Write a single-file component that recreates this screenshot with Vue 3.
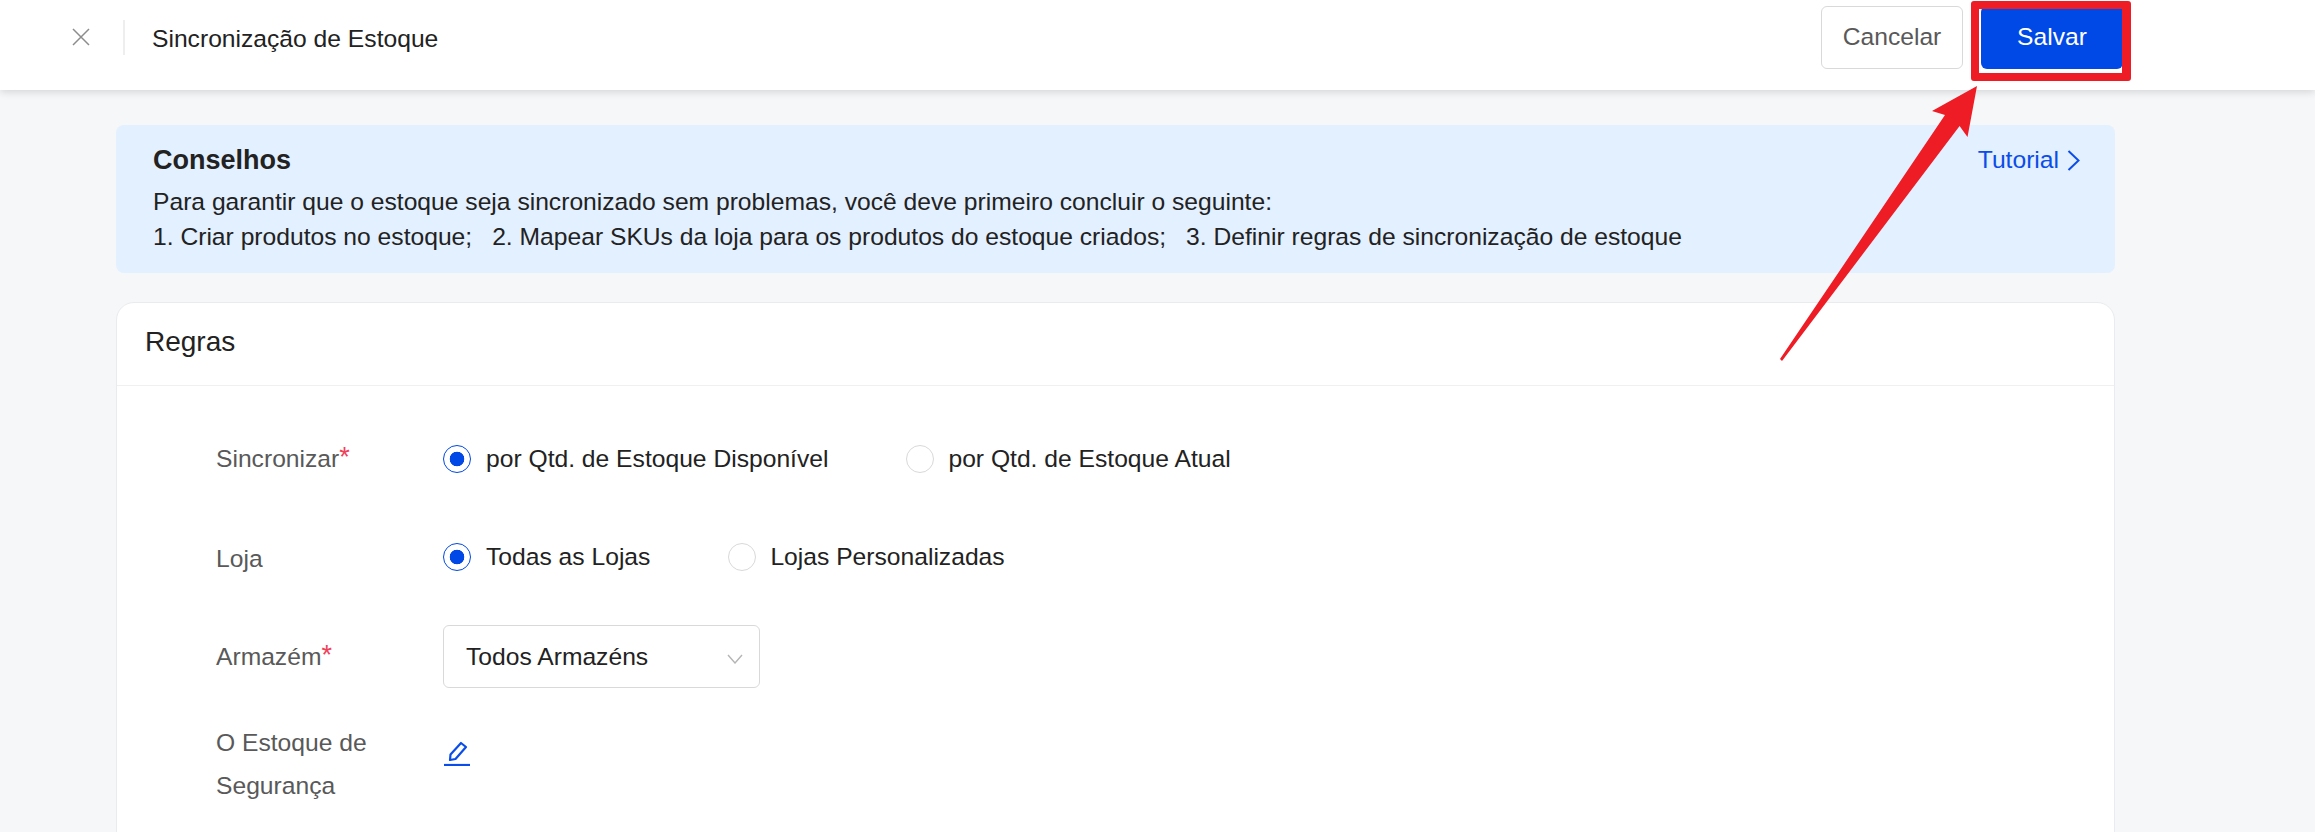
<template>
  <div class="page">
    <header class="topbar">
      <div class="top-left">
        <svg class="close" viewBox="0 0 18 18" fill="none" stroke="#8c8c8c" stroke-width="1.5"><path d="M1 1 L17 17 M17 1 L1 17" /></svg>
        <span class="vline"></span>
        <span class="title">Sincronização de Estoque</span>
      </div>
      <div class="actions">
        <button class="btn cancel">Cancelar</button>
        <button class="btn save">Salvar</button>
      </div>
    </header>
    <main class="content">
      <section class="tips">
        <div class="tips-body">
          <h2>Conselhos</h2>
          <p>Para garantir que o estoque seja sincronizado sem problemas, você deve primeiro concluir o seguinte:</p>
          <p class="steps"><span>1. Criar produtos no estoque;</span><span>2. Mapear SKUs da loja para os produtos do estoque criados;</span><span>3. Definir regras de sincronização de estoque</span></p>
        </div>
        <a class="tutorial">Tutorial
          <svg viewBox="0 0 13 21" width="13" height="21" fill="none" stroke="#0b4de8" stroke-width="2"><path d="M1.5 1 L11.5 10.5 L1.5 20" /></svg>
        </a>
      </section>
      <section class="card">
        <div class="card-head">Regras</div>
        <div class="form">
          <div class="row r1">
            <label>Sincronizar<i>*</i></label>
            <div class="radios">
              <span class="radio on"></span><span class="rtext">por Qtd. de Estoque Disponível</span>
              <span class="radio"></span><span class="rtext">por Qtd. de Estoque Atual</span>
            </div>
          </div>
          <div class="row r2">
            <label>Loja</label>
            <div class="radios">
              <span class="radio on"></span><span class="rtext">Todas as Lojas</span>
              <span class="radio"></span><span class="rtext">Lojas Personalizadas</span>
            </div>
          </div>
          <div class="row r3">
            <label>Armazém<i>*</i></label>
            <div class="select">
              <span>Todos Armazéns</span>
              <svg viewBox="0 0 16 10" width="16" height="10" fill="none" stroke="#b5b5b5" stroke-width="1.4"><path d="M1 1 L8 9 L15 1" /></svg>
            </div>
          </div>
          <div class="row r4">
            <label>O Estoque de Segurança</label>
            <svg class="pencil" viewBox="0 0 26 25" width="26" height="25" fill="none" stroke="#0b4de8" stroke-width="2.2"><path d="M6 19 L6.5 13.5 L17 2 L22 6 L11.5 18 Z" stroke-linejoin="round" /><path d="M0 24 H26" /></svg>
          </div>
        </div>
      </section>
    </main>
    <div class="hl"></div>
    <svg class="arrow" viewBox="0 0 2315 832" width="2315" height="832"><path d="M1977 86 L1932 111 L1945 115 L1780 359 L1782 361 L1959.6 126 L1967.5 137 Z" fill="#ee1c25" /></svg>
  </div>
</template>

<script setup>
</script>

<style>
html, body { margin: 0; padding: 0; overflow: hidden; }
</style>

<style scoped>
.page {
  position: relative;
  width: 2315px;
  height: 832px;
  overflow: hidden;
  background: #f6f7f9;
  font-family: "Liberation Sans", Arial, sans-serif;
  font-size: 24.65px;
  color: #222;
}
.topbar {
  height: 90px;
  box-sizing: border-box;
  background: #fff;
  box-shadow: 0 2px 8px rgba(0,0,0,.14);
  display: flex;
  align-items: flex-start;
  justify-content: space-between;
  padding: 6px 192px 0 72px;
}
.top-left { display: flex; align-items: center; height: 62px; }
.close { width: 18px; height: 18px; margin-right: 33px; }
.vline { width: 2px; height: 35px; background: #eee; margin-right: 27px; }
.title { line-height: 34px; padding-top: 4px; }
.actions { display: flex; gap: 18px; }
.btn {
  width: 142px;
  height: 63px;
  box-sizing: border-box;
  border-radius: 6px;
  font: inherit;
  padding: 0;
  padding-bottom: 2px;
}
.cancel { background: #fff; border: 1px solid #d9d9d9; color: #595959; }
.save { background: #0049e6; border: 0; color: #fff; }
.content { padding: 35px 200px 0 116px; }
.tips {
  height: 148px;
  box-sizing: border-box;
  border-radius: 8px;
  background: #e3f0ff;
  display: flex;
  justify-content: space-between;
  padding: 19px 35px 0 37px;
}
.tips h2 { margin: 0; font-size: 27px; font-weight: 700; line-height: 32px; color: #222; }
.tips p { margin: 0; line-height: 35px; color: #222; }
.tips h2 + p { margin-top: 8px; }
.steps { display: flex; gap: 20px; }
.tutorial {
  display: flex;
  align-items: center;
  gap: 8px;
  height: 32px;
  color: #0b4de8;
}
.card {
  margin-top: 29px;
  height: 700px;
  background: #fff;
  border: 1px solid #e9ebee;
  border-radius: 18px;
  box-sizing: border-box;
}
.card-head {
  height: 83px;
  line-height: 77px;
  padding-left: 28px;
  font-size: 28px;
  border-bottom: 1px solid #f0f0f0;
  box-sizing: border-box;
}
.form { padding: 0 0 0 99px; }
.row { display: flex; }
.row label { width: 227px; flex: none; color: #595959; }
.row label i { color: #f0405a; font-style: normal; position: relative; top: -1px; font-size: 27px; line-height: 0; }
.radios { display: flex; align-items: center; height: 30px; }
.radio {
  width: 28px;
  height: 28px;
  box-sizing: border-box;
  border: 1px solid #d9d9d9;
  border-radius: 50%;
  background: #fff;
  margin-right: 14px;
}
.radio.on {
  border: 1.5px solid #0049e6;
  background: radial-gradient(circle, #0049e6 0 7px, #fff 7.6px);
  margin-right: 15px;
}
.rtext { margin-right: 78px; color: #222; }
.r1 { padding-top: 58px; }
.r1 label { line-height: 30px; }
.r2 { padding-top: 68px; }
.r2 label { line-height: 34px; }
.r3 { padding-top: 49px; align-items: center; }
.select {
  width: 317px;
  height: 63px;
  box-sizing: border-box;
  border: 1px solid #d9d9d9;
  border-radius: 6px;
  display: flex;
  align-items: center;
  justify-content: space-between;
  padding: 0 16px 0 22px;
  color: #222;
}
.select svg { margin-top: 4px; }
.r4 { padding-top: 33px; }
.r4 label { line-height: 43px; width: 190px; margin-right: 37px; }
.pencil { margin-top: 20px; margin-left: 1px; }
.hl {
  position: absolute;
  left: 1971px;
  top: 1px;
  width: 160px;
  height: 80px;
  box-sizing: border-box;
  border: solid #ee1c25;
  border-width: 8px 9px 8px 8px;
  border-radius: 3px;
}
.arrow { position: absolute; left: 0; top: 0; pointer-events: none; }
</style>
